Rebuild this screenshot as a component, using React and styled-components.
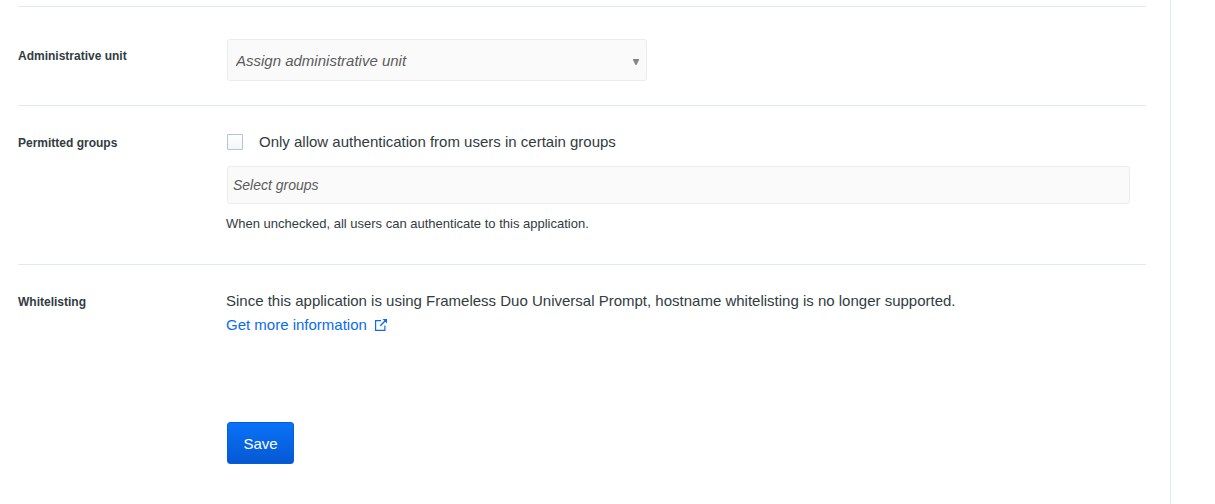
import React from "react";
import styled, { createGlobalStyle } from "styled-components";

const Global = createGlobalStyle`
  *, *::before, *::after { box-sizing: border-box; }
  body {
    margin: 0;
    background: #fff;
    color: #313c42;
    font-family: "Liberation Sans", Arial, sans-serif;
    font-size: 15px;
    line-height: 24px;
  }
`;

const Page = styled.main`
  min-height: 100vh;
  margin-right: 44px;
  padding: 6px 24px 40px 18px;
  border-right: 1px solid #e2e9ee;
`;

const Row = styled.section`
  display: grid;
  grid-template-columns: 208px minmax(0, 1fr);
  align-items: start;
  border-top: 1px solid #e2e9ee;
  padding: ${(p) => p.$pad};
`;

const rowLabel = `
  font-size: 12px;
  line-height: 26px;
  font-weight: 700;
`;
const Label = styled.label`${rowLabel}
  padding-top: 4px;
`;
const Heading = styled.h2`${rowLabel}
  margin: 0;
`;

const SelectWrap = styled.div`
  display: grid;
  align-items: center;
  max-width: 421px;
  padding-left: 1px;

  > * { grid-area: 1 / 1; }
`;
const Select = styled.select`
  appearance: none;
  width: 100%;
  height: 42px;
  padding: 0 28px 0 8px;
  border: 1px solid #ececec;
  border-radius: 3px;
  background: #fafafa;
  color: #5c5c5c;
  font: italic 15px "Liberation Sans", Arial, sans-serif;
`;
const Arrow = styled.svg`
  justify-self: end;
  margin-right: 8px;
  margin-top: 4px;
  pointer-events: none;
`;

const Check = styled.label`
  display: flex;
  align-items: center;
  gap: 16px;
  padding-left: 1px;
`;
const Checkbox = styled.input`
  appearance: none;
  width: 16px;
  height: 16px;
  margin: 0;
  border: 1px solid #b5c3d3;
  border-radius: 1px;
  background: linear-gradient(#fff, #f3f5f8);
  &:checked { background: #0a6cf0; }
`;
const Groups = styled.input`
  display: block;
  width: calc(100% - 17px);
  height: 38px;
  margin: 12px 0 8px 1px;
  padding: 0 5px;
  border: 1px solid #ececec;
  border-radius: 3px;
  background: #fafafa;
  font: italic 14px "Liberation Sans", Arial, sans-serif;
  &::placeholder { color: #5c5c5c; opacity: 1; }
`;
const Hint = styled.p`
  margin: 0;
  font-size: 13px;
`;
const Text = styled.p`
  margin: 0;
`;
const Link = styled.a`
  display: inline-flex;
  align-items: center;
  gap: 8px;
  color: #0a6cf0;
  text-decoration: none;
`;
const Actions = styled.div`
  padding: 61px 0 0 209px;
`;
const Save = styled.button`
  min-width: 67px;
  height: 42px;
  padding: 0 15px;
  border: 1px solid #0560d6;
  border-radius: 3px;
  background: linear-gradient(#0a72f8, #0559d2);
  color: #fff;
  font: 15px "Liberation Sans", Arial, sans-serif;
`;

export default function App() {
  return (
    <>
      <Global />
      <Page>
        <Row $pad="32px 0 24px">
          <Label htmlFor="unit">Administrative unit</Label>
          <SelectWrap>
            <Select id="unit">
              <option>Assign administrative unit</option>
            </Select>
            <Arrow width="6" height="6" viewBox="0 0 6 6" aria-hidden="true">
              <path d="M0 0h6v1L3.5 6h-1L0 1z" fill="#868686" />
            </Arrow>
          </SelectWrap>
        </Row>
        <Row $pad="24px 0 28px">
          <Heading>Permitted groups</Heading>
          <div>
            <Check>
              <Checkbox type="checkbox" />
              Only allow authentication from users in certain groups
            </Check>
            <Groups placeholder="Select groups" aria-label="Select groups" />
            <Hint>When unchecked, all users can authenticate to this application.</Hint>
          </div>
        </Row>
        <Row $pad="24px 0">
          <Heading>Whitelisting</Heading>
          <div>
            <Text>
              Since this application is using Frameless Duo Universal Prompt, hostname whitelisting is no longer supported.
            </Text>
            <Link href="#more">
              Get more information
              <svg width="12" height="12" viewBox="0 0 12 12" fill="none" stroke="currentColor" aria-hidden="true">
                <path d="M6 1.6H.6v9.8h9.3V6.5" strokeWidth="1.2" />
                <path d="M5.3 6.7 10.5 1.5" strokeWidth="1.4" />
                <path d="M7.5 0H12v4.5z" fill="currentColor" stroke="none" />
              </svg>
            </Link>
          </div>
        </Row>
        <Actions>
          <Save type="submit">Save</Save>
        </Actions>
      </Page>
    </>
  );
}
